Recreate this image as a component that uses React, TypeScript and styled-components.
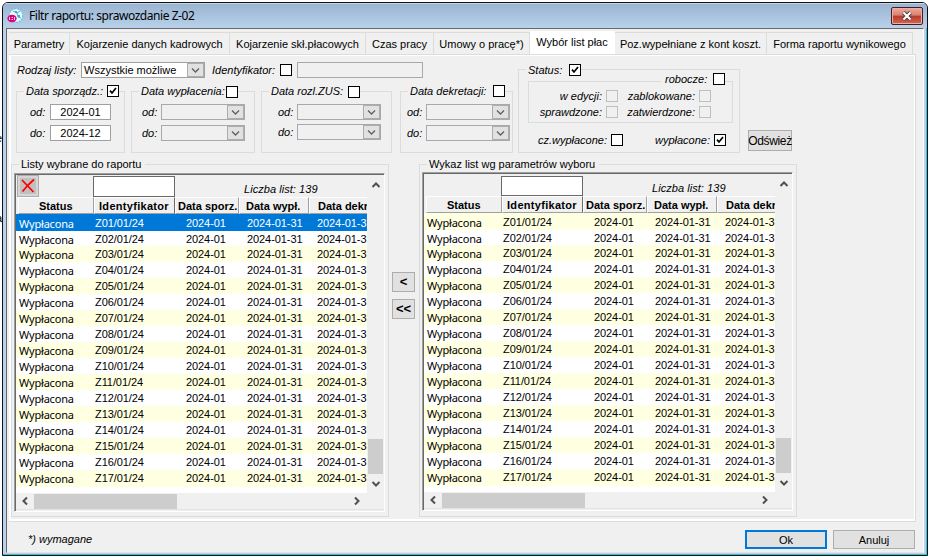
import React from "react";
import styled, { createGlobalStyle, css } from "styled-components";

const Global = createGlobalStyle`
  *, *::before, *::after { box-sizing: border-box; }
  body { margin: 0; background: #fff; }
`;

const face = "#f0f0f0";
const line = "#dcdcdc";

const Desktop = styled.div`
  width: 929px;
  height: 557px;
  display: flex;
  overflow: hidden;
  background: #fff;
  color: #000;
  font: 11px/12px "Liberation Sans", Arial, sans-serif;
  white-space: nowrap;
`;

const Behind = styled.div`
  width: 2px;
  height: 557px;
  padding-top: 132px;
  overflow: hidden;
  display: flex;
  flex-direction: column;
  align-items: flex-end;
  gap: 68px;
  flex: none;
`;

const Window = styled.div`
  width: 926px;
  height: 554px;
  margin-top: 2px;
  border: 1px solid #111;
  border-radius: 6px 6px 0 0;
  background: #b9d1ea;
  box-shadow: inset -1px -1px 0 #2bc4dd;
  padding: 0 3px 2px 3px;
  display: flex;
  flex-direction: column;
  flex: none;
  overflow: hidden;
`;

const TitleBar = styled.div`
  height: 25px;
  margin: 0 -3px;
  padding: 0 4px;
  display: flex;
  flex: none;
  background: linear-gradient(#99b4d1, #b9d1ea);
  box-shadow: inset 0 1px 0 #c6d7ea;
`;

const Title = styled.div`
  margin: 4px auto 0 5px;
  font: 12px/18px "Noto Sans", sans-serif;
  letter-spacing: -0.45px;
`;

const CloseButton = styled.div`
  width: 32px;
  height: 18px;
  margin-top: 4px;
  border: 1px solid #4a1a1e;
  border-radius: 2px;
  background: linear-gradient(#e9aa9d 0, #d98272 45%, #b8392a 50%, #cf6a52 100%);
  box-shadow: inset 0 0 0 1px #e9b0a6;
  display: flex;
  align-items: center;
  justify-content: center;
`;

const Client = styled.div`
  flex: 1;
  background: ${face};
  border: solid;
  border-width: 1px;
  border-color: #696969 #fff #e3e3e3 #696969;
  display: flex;
  flex-direction: column;
  padding: 2px 0 0 2px;
`;

const Tabs = styled.div`
  height: 23px;
  display: flex;
  align-items: flex-end;
  flex: none;
`;

const Tab = styled.div<{ $w: number; $active?: boolean; $ls?: number }>`
  width: ${(p) => p.$w}px;
  height: 22px;
  border-top: 1px solid ${line};
  border-right: 1px solid ${line};
  line-height: 22px;
  text-align: center;
  letter-spacing: ${(p) => p.$ls ?? 0}px;
  ${(p) =>
    p.$active &&
    css`
      height: 24px;
      background: #fff;
      border-color: #fff;
      line-height: 20px;
      margin-bottom: -1px;
    `}
`;

const Panel = styled.div`
  width: 907px;
  height: 468px;
  border: solid ${line};
  border-width: 1px 1px 1px 0;
  box-shadow: inset 0 0 0 1px #fff, inset 2px 0 0 #fff, inset 0 -2px 0 #fff;
  padding: 1px 0 0 2px;
  display: flex;
  flex-direction: column;
  flex: none;
`;

const Filters = styled.div`
  height: 108px;
  display: flex;
  align-items: flex-start;
`;

const FilterColumn = styled.div`
  width: 502px;
  padding: 6px 0 0 5px;
`;

const Line = styled.div<{ $mt?: number; $h?: number; $pl?: number }>`
  height: ${(p) => p.$h ?? 16}px;
  margin-top: ${(p) => p.$mt ?? 0}px;
  padding-left: ${(p) => p.$pl ?? 0}px;
  display: flex;
  align-items: center;
`;

const Label = styled.span<{ $w?: number; $ls?: number; $right?: boolean }>`
  width: ${(p) => (p.$w ? `${p.$w}px` : "auto")};
  flex: none;
  font-style: italic;
  letter-spacing: ${(p) => p.$ls ?? 0}px;
  text-align: ${(p) => (p.$right ? "right" : "left")};
  padding-right: ${(p) => (p.$right ? 4 : 0)}px;
`;

const Box = styled.span<{ $off?: boolean; $ml?: number; $down?: boolean }>`
  width: 12px;
  height: 12px;
  flex: none;
  margin-left: ${(p) => p.$ml ?? 0}px;
  margin-top: ${(p) => (p.$down ? 1 : 0)}px;
  border: 1px solid ${(p) => (p.$off ? "#bfbfbf" : "#000")};
  background: ${(p) => (p.$off ? face : "#fff")};
  display: flex;
`;

const Input = styled.div<{ $w: number; $off?: boolean; $ml?: number }>`
  width: ${(p) => p.$w}px;
  height: 16px;
  margin-left: ${(p) => p.$ml ?? 0}px;
  border: 1px solid ${(p) => (p.$off ? "#a9a9ab" : "#a0a0a0")};
  background: ${(p) => (p.$off ? face : "#fff")};
  line-height: 15px;
  text-align: center;
  flex: none;
`;

const SelectFrame = styled(Input)`
  display: flex;
  justify-content: space-between;
  padding-left: 2px;
`;

const Drop = styled.span`
  width: 17px;
  height: 14px;
  border: 1px solid #adadad;
  background: #e1e1e1;
  display: flex;
  align-items: center;
  justify-content: center;
`;

const Groups = styled.div`
  display: flex;
  margin-top: 13px;
`;

const Group = styled.div<{ $w: number; $h: number; $ml?: number; $mt?: number }>`
  width: ${(p) => p.$w}px;
  height: ${(p) => p.$h}px;
  margin-left: ${(p) => p.$ml ?? 0}px;
  margin-top: ${(p) => p.$mt ?? 0}px;
  border: 1px solid ${line};
  flex: none;
`;

const Legend = styled.div<{ $ml?: number; $up?: number }>`
  width: fit-content;
  height: 13px;
  margin-top: ${(p) => -(p.$up ?? 7)}px;
  margin-left: ${(p) => p.$ml ?? 7}px;
  padding-left: 2px;
  background: ${face};
  display: flex;
  align-items: flex-start;
`;

const RightLegend = styled(Legend)`
  margin-left: auto;
  margin-right: 7px;
  padding-left: 4px;
`;

const Button = styled.div<{ $w: number; $h: number; $ok?: boolean; $bold?: boolean }>`
  width: ${(p) => p.$w}px;
  height: ${(p) => p.$h}px;
  border: ${(p) => (p.$ok ? "2px solid #0078d7" : "1px solid #adadad")};
  background: #e1e1e1;
  display: flex;
  align-items: center;
  justify-content: center;
  font-weight: ${(p) => (p.$bold ? 700 : 400)};
  font-size: ${(p) => (p.$bold ? 13 : 11)}px;
  flex: none;
`;

const Refresh = styled(Button)`
  margin: 74px 0 0 8px;
  font-size: 12px;
  letter-spacing: -0.35px;
`;

const Lists = styled.div`
  display: flex;
`;

const Mover = styled.div`
  width: 30px;
  padding: 108px 0 0 3px;
  display: flex;
  flex-direction: column;
  gap: 7px;
`;

const ListBox = styled.div<{ $mt: number }>`
  width: 371px;
  height: 339px;
  margin: ${(p) => p.$mt}px 0 0 2px;
  border: 1px solid #a0a0a0;
  border-right-color: #fff;
  border-bottom-color: #fff;
  box-shadow: inset 1px 1px 0 #696969;
  padding: 1px 0 0 1px;
  display: grid;
  grid-template-columns: 351px 17px;
  grid-template-rows: 318px 17px;
`;

const Sheet = styled.div`
  background: #fff;
  overflow: hidden;
`;

const Top = styled.div`
  height: 22px;
  padding-left: 1px;
  background: ${face};
  display: flex;
  align-items: flex-end;
`;

const Tool = styled.div<{ $empty?: boolean }>`
  width: 22px;
  height: 22px;
  margin-right: 54px;
  border: ${(p) => (p.$empty ? "0" : "1px solid #adadad")};
  background: ${(p) => (p.$empty ? face : "#c0c0c0")};
  box-shadow: ${(p) => (p.$empty ? "none" : "inset 0 0 0 2px #d6d6d6")};
  display: flex;
  align-items: center;
  justify-content: center;
`;

const Search = styled.div<{ $h: number }>`
  width: 82px;
  height: ${(p) => p.$h}px;
  background: #fff;
  border: 1px solid #696969;
`;

const Count = styled.div`
  margin: 0 0 2px 69px;
  font-style: italic;
  letter-spacing: 0.05px;
`;

const Heads = styled.div`
  height: 17px;
  padding-left: 2px;
  background: ${face};
  display: flex;
`;

const Head = styled.div<{ $w: number; $pl: number; $ls?: number; $dark?: boolean }>`
  width: ${(p) => p.$w}px;
  height: 17px;
  padding-left: ${(p) => p.$pl}px;
  border: solid;
  border-width: 1px 1px 1px 1px;
  border-color: #fff ${(p) => (p.$dark ? "#696969" : "#a0a0a0")} #a0a0a0 #fff;
  font-weight: 700;
  line-height: 17px;
  letter-spacing: ${(p) => p.$ls ?? 0}px;
  overflow: hidden;
  flex: none;
`;

const Row = styled.div<{ $h: number; $lift: number; $tone: "sel" | "odd" | "even" }>`
  height: ${(p) => p.$h}px;
  padding: ${(p) => 3 - p.$lift}px 0 0 3px;
  display: grid;
  grid-template-columns: 76px 91px 61px 70px 60px;
  background: ${(p) => ({ sel: "#0078d7", odd: "#ffffe1", even: "#fff" })[p.$tone]};
  color: ${(p) => (p.$tone === "sel" ? "#fff" : "#000")};
  letter-spacing: -0.08px;
`;

const State = styled.span`
  font: 11px/14px "Noto Sans", sans-serif;
  letter-spacing: -0.2px;
`;

const VBar = styled.div`
  background: ${face};
  display: flex;
  flex-direction: column;
  align-items: center;
  padding: 5px 0 4px;
`;

const VThumb = styled.div`
  width: 15px;
  height: 35px;
  margin: auto 0 5px;
  background: #cdcdcd;
`;

const HBar = styled.div`
  grid-column: 1 / 3;
  background: ${face};
  display: flex;
  align-items: center;
  padding: 0 22px 0 4px;
  border-bottom: 1px solid #e3e3e3;
`;

const HThumb = styled.div`
  width: 143px;
  height: 15px;
  margin: 0 auto 0 4px;
  background: #cdcdcd;
`;

const Footer = styled.div`
  height: 30px;
  padding: 8px 8px 0 19px;
  display: flex;
  justify-content: space-between;
`;

const Actions = styled.div`
  display: flex;
  gap: 6px;
`;

function Check({ on, ...rest }: { on?: boolean; $off?: boolean; $ml?: number; $down?: boolean }) {
  return (
    <Box {...rest}>
      {on && (
        <svg width="10" height="10" viewBox="0 0 10 10">
          <path d="M2 4.6 L4 7 L8 2" fill="none" stroke="#000" strokeWidth="1.7" />
        </svg>
      )}
    </Box>
  );
}

function Chevron({ dir }: { dir: "up" | "down" | "left" | "right" }) {
  const d = {
    up: "M1.5 7 L5 3.5 L8.5 7",
    down: "M1.5 3 L5 6.5 L8.5 3",
    left: "M7 1.5 L3.5 5 L7 8.5",
    right: "M3 1.5 L6.5 5 L3 8.5",
  }[dir];
  return (
    <svg width="10" height="10" viewBox="0 0 10 10">
      <path d={d} fill="none" stroke="#505050" strokeWidth="2" />
    </svg>
  );
}

function Select({ text, ...rest }: { text?: string; $w: number; $off?: boolean; $ml?: number }) {
  return (
    <SelectFrame {...rest}>
      <span>{text}</span>
      <Drop>
        <svg width="9" height="8" viewBox="0 0 9 8">
          <path d="M1 2.5 L4.5 6 L8 2.5" fill="none" stroke="#606060" strokeWidth="1.3" />
        </svg>
      </Drop>
    </SelectFrame>
  );
}

type DateGroupProps = {
  title: string; w: number; ml?: number; legendMl?: number; labelW: number; down?: boolean;
  pl: number; ls?: number; gap?: number; labelCol?: number; values?: [string, string];
};

function DateGroup({ title, w, ml, legendMl, labelW, down, pl, ls, gap = 5, labelCol = 19, values }: DateGroupProps) {
  return (
    <Group $w={w} $h={62} $ml={ml}>
      <Legend $ml={legendMl}>
        <Label $w={labelW} $ls={ls}>{title}</Label>
        <Check on={!!values} $down={down} />
      </Legend>
      {["od:", "do:"].map((t, i) => (
        <Line key={t} $mt={i ? gap : 6} $pl={pl}>
          <Label $w={labelCol}>{t}</Label>
          {values ? <Input $w={61}>{values[i]}</Input> : <Select $w={84} $off />}
        </Line>
      ))}
    </Group>
  );
}

function ListPanel({ title, chosen, ls }: { title: string; chosen?: boolean; ls?: number }) {
  const rows = Array.from({ length: 17 }, (_, i) => `Z${String(i + 1).padStart(2, "0")}/01/24`);
  return (
    <Group $w={378} $h={353}>
      <Legend $ml={7} style={undefined}>
        <Label as="span" $ls={ls}><Upright>{title}</Upright></Label>
      </Legend>
      <ListBox $mt={chosen ? 2 : 1}>
        <Sheet>
          <Top>
            <Tool $empty={!chosen}>
              {chosen && (
                <svg width="16" height="16" viewBox="0 0 16 16">
                  <path d="M2 2 L13.5 14 M14 1.5 L8 7 L2.5 13.5" fill="none" stroke="#f00" strokeWidth="1.8" />
                </svg>
              )}
            </Tool>
            <Search $h={chosen ? 21 : 20} />
            <Count>Liczba list: 139</Count>
          </Top>
          <Heads>
            <Head $w={76} $pl={20}>Status</Head>
            <Head $w={81} $pl={4} $ls={0.3} $dark>Identyfikator</Head>
            <Head $w={64} $pl={2}>Data sporz.</Head>
            <Head $w={70} $pl={6}>Data wypł.</Head>
            <Head $w={76} $pl={8}>Data dekr.</Head>
          </Heads>
          {rows.map((id, i) => (
            <Row
              key={id}
              $h={i === 0 || i === 16 ? 17 : i === 1 ? 15 : 16}
              $lift={i === 0 ? 0 : 1}
              $tone={chosen && i === 0 ? "sel" : i % 2 ? "even" : "odd"}
            >
              <State>Wypłacona</State>
              <span>{id}</span>
              <span>2024-01</span>
              <span>2024-01-31</span>
              <span>2024-01-31</span>
            </Row>
          ))}
        </Sheet>
        <VBar>
          <Chevron dir="up" />
          <VThumb />
          <Chevron dir="down" />
        </VBar>
        <HBar>
          <Chevron dir="left" />
          <HThumb />
          <Chevron dir="right" />
        </HBar>
      </ListBox>
    </Group>
  );
}

const Upright = styled.span`
  font-style: normal;
  padding-right: 4px;
`;

function AppIcon() {
  return (
    <svg width="17" height="17" viewBox="0 0 17 17" style={undefined}>
      <circle cx="9" cy="8.5" r="6.8" fill="#e8f7fb" stroke="#62c6e4" strokeWidth="1.2" strokeDasharray="2 1" />
      <path d="M6 4 L10 6 L13 4 M10 6 L11 10 L14 11" stroke="#45b5da" fill="none" />
      <circle cx="9" cy="5" r="1" fill="#1696c8" />
      <circle cx="12" cy="9" r="1" fill="#1696c8" />
      <ellipse cx="5" cy="11.5" rx="4.6" ry="3.8" fill="#e2007a" />
      <path d="M2.5 10 V13 M4.5 10.5 H6 M4.5 12.5 H6 M7.5 10 V13" stroke="#fff" strokeWidth=".8" />
    </svg>
  );
}

const IconSlot = styled.span`
  width: 17px;
  margin-top: 4px;
  flex: none;
`;

export default function App() {
  return (
    <Desktop>
      <Global />
      <Behind><span>e</span><span>a</span></Behind>
      <Window>
        <TitleBar>
          <IconSlot><AppIcon /></IconSlot>
          <Title>Filtr raportu: sprawozdanie Z-02</Title>
          <CloseButton>
            <svg width="12" height="10" viewBox="0 0 12 10">
              <path d="M2.5 1.5 L9.5 8.5 M9.5 1.5 L2.5 8.5" stroke="#4b3a42" strokeWidth="4" />
              <path d="M2.5 1.5 L9.5 8.5 M9.5 1.5 L2.5 8.5" stroke="#fff" strokeWidth="2.2" />
            </svg>
          </CloseButton>
        </TitleBar>
        <Client>
          <Tabs>
            <Tab $w={61}>Parametry</Tab>
            <Tab $w={160}>Kojarzenie danych kadrowych</Tab>
            <Tab $w={136}>Kojarzenie skł.płacowych</Tab>
            <Tab $w={68}>Czas pracy</Tab>
            <Tab $w={96}>Umowy o pracę*)</Tab>
            <Tab $w={85} $active>Wybór list płac</Tab>
            <Tab $w={152}>Poz.wypełniane z kont koszt.</Tab>
            <Tab $w={146}>Forma raportu wynikowego</Tab>
          </Tabs>
          <Panel>
            <Filters>
              <FilterColumn>
                <Line $pl={1}>
                  <Label $w={64}>Rodzaj listy:</Label>
                  <Select $w={124} text="Wszystkie możliwe" />
                  <Label $w={75}><Indent>Identyfikator:</Indent></Label>
                  <Check />
                  <Input $w={126} $off $ml={5} />
                </Line>
                <Groups>
                  <DateGroup title="Data sporządz.:" w={109} labelW={81} pl={13} labelCol={20} values={["2024-01", "2024-12"]} />
                  <DateGroup title="Data wypłacenia:" w={124} ml={6} labelW={85} pl={10} down />
                  <DateGroup title="Data rozl.ZUS:" w={131} ml={6} labelW={77} pl={16} down gap={4} />
                  <DateGroup title="Data dekretacji:" w={113} ml={8} labelW={83} pl={6} />
                </Groups>
              </FilterColumn>
              <Group $w={222} $h={84} $ml={5} $mt={13}>
                <Legend $up={6}>
                  <Label $w={41}>Status:</Label>
                  <Check on />
                </Legend>
                <Group $w={205} $h={42} $ml={9} $mt={4}>
                  <RightLegend $up={9}>
                    <Label $w={48}>robocze:</Label>
                    <Check />
                  </RightLegend>
                  <Line $h={12} $mt={4}>
                    <Label $w={77} $right>w edycji:</Label>
                    <Check $off />
                    <Label $w={81} $right>zablokowane:</Label>
                    <Check $off />
                  </Line>
                  <Line $h={12} $mt={4}>
                    <Label $w={77} $right>sprawdzone:</Label>
                    <Check $off />
                    <Label $w={81} $right>zatwierdzone:</Label>
                    <Check $off />
                  </Line>
                </Group>
                <Line $h={12} $mt={11}>
                  <Label $w={92} $right>cz.wypłacone:</Label>
                  <Check />
                  <Label $w={91} $right>wypłacone:</Label>
                  <Check on />
                </Line>
              </Group>
              <Refresh $w={44} $h={21}>Odśwież</Refresh>
            </Filters>
            <Lists>
              <ListPanel title="Listy wybrane do raportu" chosen />
              <Mover>
                <Button $w={23} $h={20} $bold>&lt;</Button>
                <Button $w={23} $h={20} $bold>&lt;&lt;</Button>
              </Mover>
              <ListPanel title="Wykaz list wg parametrów wyboru" />
            </Lists>
          </Panel>
          <Footer>
            <Note>*) wymagane</Note>
            <Actions>
              <Button $w={82} $h={19} $ok>Ok</Button>
              <Button $w={82} $h={19}>Anuluj</Button>
            </Actions>
          </Footer>
        </Client>
      </Window>
    </Desktop>
  );
}

const Indent = styled.span`
  padding-left: 7px;
`;

const Note = styled.div`
  margin-top: 3px;
  font-style: italic;
`;
